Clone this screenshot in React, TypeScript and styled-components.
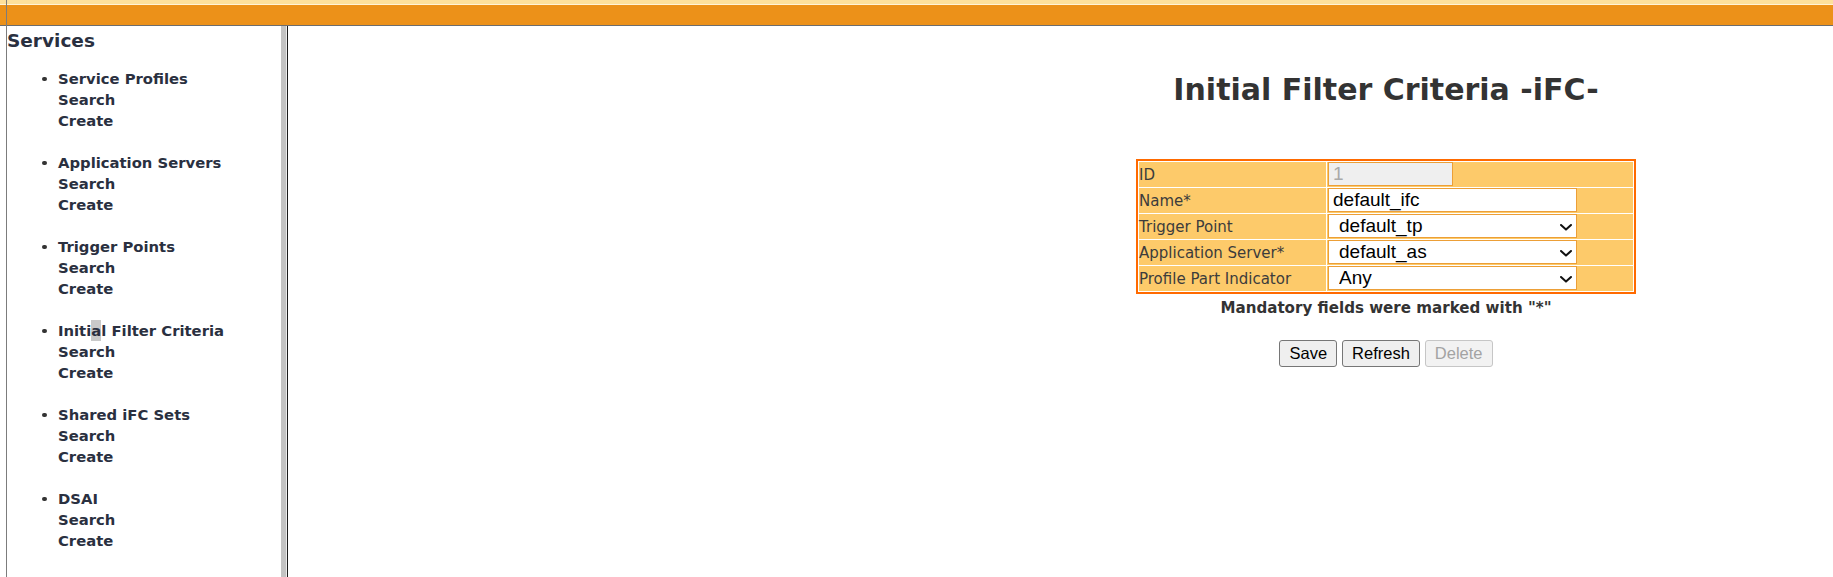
import React from 'react';
import styled, { createGlobalStyle } from 'styled-components';

const GlobalStyle = createGlobalStyle`
  html, body { margin: 0; padding: 0; background: #fff; }
  body { font-family: "DejaVu Sans", Verdana, sans-serif; }
`;

const Page = styled.div`
  position: relative;
  height: 577px;
  display: grid;
  grid-template-rows: 26px 1fr;
  overflow: hidden;
  &::before {
    content: '';
    position: absolute;
    left: 6px;
    top: 0;
    bottom: 0;
    width: 1px;
    background: #7c7c7c;
    z-index: 2;
  }
`;

const TopBar = styled.header`
  background: linear-gradient(
    to bottom,
    #fde09c 0 4px,
    #fff3d6 4px 5px,
    #ec9119 5px 25px,
    #6d6d6d 25px 26px
  );
`;

const Frames = styled.div`
  display: grid;
  grid-template-columns: 281px 7px 1fr;
  min-height: 0;
`;

const Splitter = styled.div`
  background: linear-gradient(to right, #c3c3c3 0 5px, #ececec 5px 6px, #1c1c1c 6px 7px);
`;

const Sidebar = styled.nav`
  padding-top: 2px;
  color: #2a3040;
  overflow: hidden;
`;

const SideTitle = styled.h3`
  margin: 0 0 15px 7px;
  font-size: 18.5px;
  line-height: 25px;
  font-weight: bold;
`;

const GroupList = styled.ul`
  list-style: none;
  margin: 0;
  padding: 0 0 0 42px;
  display: flex;
  flex-direction: column;
  gap: 21px;
`;

const Group = styled.li`
  display: grid;
  grid-template-columns: 16px auto;
  font-size: 14.8px;
  font-weight: bold;
  line-height: 21px;
`;

const Bullet = styled.span`
  width: 4.5px;
  height: 4.5px;
  border-radius: 50%;
  background: #333;
  margin-top: 8.5px;
`;

const Links = styled.div`
  display: flex;
  flex-direction: column;
`;

const NavLink = styled.a`
  color: inherit;
  text-decoration: none;
`;

const Selected = styled.span`
  display: inline-block;
  background: #c9c9c9;
`;

const Main = styled.main`
  padding: 46px 0 0 651px;
  display: flex;
  flex-direction: column;
  align-items: center;
  color: #333;
`;

const Title = styled.h1`
  margin: 0 0 51px;
  font-size: 30px;
  line-height: 36px;
  font-weight: bold;
`;

const FormGrid = styled.div`
  display: grid;
  grid-template-columns: 187px 306px;
  grid-auto-rows: 25px;
  gap: 1px;
  padding: 1px;
  border: 2px solid #ff6a00;
  background: #fff;
`;

const Label = styled.div`
  background: #fdca6a;
  font-size: 15px;
  color: #3c3c3c;
  display: flex;
  align-items: center;
  white-space: nowrap;
`;

const Field = styled.div`
  background: #fdca6a;
  display: flex;
  align-items: flex-start;
  padding-left: 1px;
`;

const TextInput = styled.input<{ $w: number }>`
  width: ${(p) => p.$w}px;
  height: 24px;
  box-sizing: border-box;
  border: 1px solid #ec9f37;
  border-radius: 0;
  font-family: "Liberation Sans", Arial, sans-serif;
  font-size: 19px;
  padding: 0 4px;
  margin: 0;
  background: #fff;
  color: #000;
  outline: none;
  &:disabled {
    background: #efefef;
    color: #a9a9a9;
  }
`;

const SelectWrap = styled.div`
  position: relative;
  display: inline-flex;
`;

const Select = styled.select`
  appearance: none;
  -webkit-appearance: none;
  width: 249px;
  height: 24px;
  box-sizing: border-box;
  border: 1px solid #ec9f37;
  border-radius: 0;
  font-family: "Liberation Sans", Arial, sans-serif;
  font-size: 19px;
  line-height: 22px;
  padding: 0 24px 0 10px;
  margin: 0;
  background: #fff;
  color: #000;
  outline: none;
`;

const Chevron = styled.svg`
  position: absolute;
  right: 5px;
  top: 10px;
  width: 12px;
  height: 7px;
  pointer-events: none;
`;

const Note = styled.p`
  margin: 5px 0 0;
  font-size: 15.1px;
  font-weight: bold;
  line-height: 18px;
  color: #333;
`;

const Actions = styled.div`
  display: flex;
  gap: 5px;
  margin-top: 23px;
`;

const Button = styled.button`
  font-family: "Liberation Sans", Arial, sans-serif;
  font-size: 16.5px;
  height: 27px;
  padding: 0 9px;
  border: 1px solid #767676;
  border-radius: 3px;
  background: #efefef;
  color: #000;
  &:disabled {
    color: #a3a3a3;
    border-color: #c6c6c6;
    background: #f2f2f2;
  }
`;

const groups: { title: React.ReactNode }[] = [
  { title: 'Service Profiles' },
  { title: 'Application Servers' },
  { title: 'Trigger Points' },
  {
    title: (
      <>
        Initi<Selected>a</Selected>l Filter Criteria
      </>
    ),
  },
  { title: 'Shared iFC Sets' },
  { title: 'DSAI' },
];

function Dropdown({ options, value }: { options: string[]; value: string }) {
  return (
    <SelectWrap>
      <Select defaultValue={value}>
        {options.map((o) => (
          <option key={o} value={o}>
            {o}
          </option>
        ))}
      </Select>
      <Chevron viewBox="0 0 12 7">
        <polyline points="1,1 6,5.6 11,1" fill="none" stroke="#111" strokeWidth="2" strokeLinecap="round" strokeLinejoin="round" />
      </Chevron>
    </SelectWrap>
  );
}

export default function App() {
  return (
    <>
      <GlobalStyle />
      <Page>
        <TopBar />
        <Frames>
          <Sidebar>
            <SideTitle>Services</SideTitle>
            <GroupList>
              {groups.map((g, i) => (
                <Group key={i}>
                  <Bullet />
                  <Links>
                    <NavLink href="#">{g.title}</NavLink>
                    <NavLink href="#">Search</NavLink>
                    <NavLink href="#">Create</NavLink>
                  </Links>
                </Group>
              ))}
            </GroupList>
          </Sidebar>
          <Splitter />
          <Main>
            <Title>Initial Filter Criteria -iFC-</Title>
            <FormGrid>
              <Label>ID</Label>
              <Field>
                <TextInput $w={125} value="1" disabled readOnly />
              </Field>
              <Label>Name*</Label>
              <Field>
                <TextInput $w={249} defaultValue="default_ifc" />
              </Field>
              <Label>Trigger Point</Label>
              <Field>
                <Dropdown options={['default_tp']} value="default_tp" />
              </Field>
              <Label>Application Server*</Label>
              <Field>
                <Dropdown options={['default_as']} value="default_as" />
              </Field>
              <Label>Profile Part Indicator</Label>
              <Field>
                <Dropdown options={['Any', 'Registered', 'Unregistered']} value="Any" />
              </Field>
            </FormGrid>
            <Note>Mandatory fields were marked with "*"</Note>
            <Actions>
              <Button type="button">Save</Button>
              <Button type="button">Refresh</Button>
              <Button type="button" disabled>
                Delete
              </Button>
            </Actions>
          </Main>
        </Frames>
      </Page>
    </>
  );
}
